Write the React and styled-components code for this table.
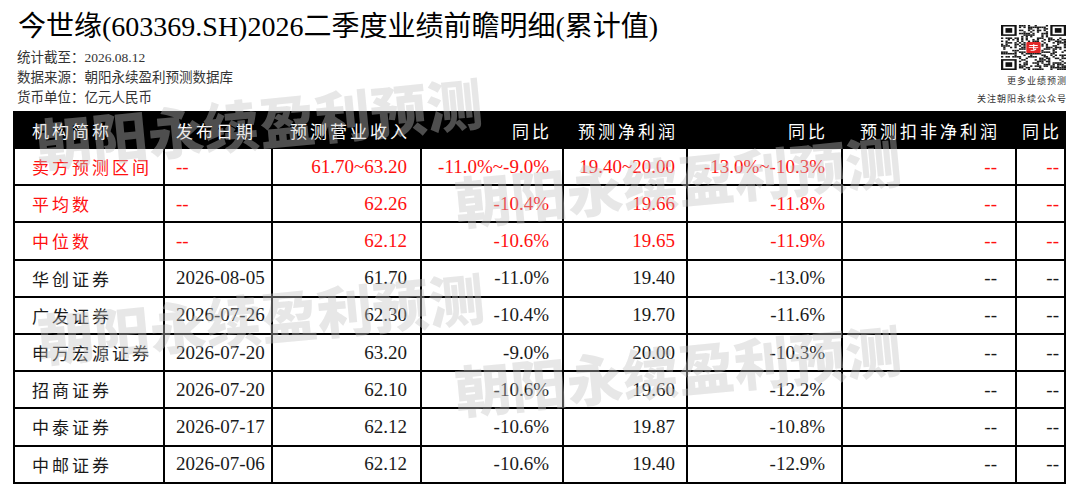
import React from 'react';
import styled, { createGlobalStyle } from 'styled-components';

const GlobalStyle = createGlobalStyle`
  html, body {
    margin: 0;
    padding: 0;
    background: #ffffff;
  }
  body {
    font-family: "Liberation Serif", "Noto Sans CJK SC", serif;
    color: #111111;
  }
`;

// column setup: track width (incl. right border), alignment, padding
const columns = [
  { w: 150, align: 'left', pl: 17 },
  { w: 108, align: 'left', pl: 11 },
  { w: 149, align: 'right', pr: 13 },
  { w: 142, align: 'right', pr: 13 },
  { w: 124, align: 'right', pr: 11 },
  { w: 155, align: 'right', pr: 16 },
  { w: 174, align: 'right', pr: 18 },
  { w: 49, align: 'right', pr: 5 },
];

const headers = ['机构简称', '发布日期', '预测营业收入', '同比', '预测净利润', '同比', '预测扣非净利润', '同比'];

const rows = [
  { red: true, cells: ['卖方预测区间', '--', '61.70~63.20', '-11.0%~-9.0%', '19.40~20.00', '-13.0%~-10.3%', '--', '--'] },
  { red: true, cells: ['平均数', '--', '62.26', '-10.4%', '19.66', '-11.8%', '--', '--'] },
  { red: true, cells: ['中位数', '--', '62.12', '-10.6%', '19.65', '-11.9%', '--', '--'] },
  { cells: ['华创证券', '2026-08-05', '61.70', '-11.0%', '19.40', '-13.0%', '--', '--'] },
  { cells: ['广发证券', '2026-07-26', '62.30', '-10.4%', '19.70', '-11.6%', '--', '--'] },
  { cells: ['申万宏源证券', '2026-07-20', '63.20', '-9.0%', '20.00', '-10.3%', '--', '--'] },
  { cells: ['招商证券', '2026-07-20', '62.10', '-10.6%', '19.60', '-12.2%', '--', '--'] },
  { cells: ['中泰证券', '2026-07-17', '62.12', '-10.6%', '19.87', '-10.8%', '--', '--'] },
  { cells: ['中邮证券', '2026-07-06', '62.12', '-10.6%', '19.40', '-12.9%', '--', '--'] },
];

const watermarks = [
  { x: 36, y: 115 },
  { x: 455, y: 173 },
  { x: 38, y: 310 },
  { x: 455, y: 362 },
];

const Page = styled.div`
  position: relative;
  width: 1080px;
  height: 499px;
  box-sizing: border-box;
  padding: 0 14px 0 13px;
  overflow: hidden;
`;

const TopBar = styled.div`
  display: flex;
  justify-content: space-between;
  height: 111px;
`;

const TitleBlock = styled.div`
  padding: 10px 0 0 4px;
`;

const Title = styled.h1`
  margin: 0 0 4px 1px;
  font-size: 28px;
  line-height: 34px;
  font-weight: 400;
  color: #000000;
  white-space: nowrap;
`;

const MetaLine = styled.div`
  font-size: 13.5px;
  line-height: 20px;
  color: #333333;
  white-space: nowrap;
`;

const QrBlock = styled.div`
  display: flex;
  flex-direction: column;
  align-items: flex-end;
  padding-top: 25px;
`;

const QrCode = styled.svg`
  display: block;
  width: 65px;
  height: 45px;
  margin-bottom: 2px;
`;

const QrCaption = styled.div`
  font-family: "Noto Sans CJK SC", sans-serif;
  font-size: 9px;
  line-height: 18px;
  letter-spacing: 1px;
  margin-right: -1px;
  color: #333333;
  white-space: nowrap;
`;

const Grid = styled.div`
  display: grid;
  grid-template-columns: ${columns.map((c) => `${c.w}px`).join(' ')};
  grid-template-rows: 38px;
  grid-auto-rows: 37.2px;
  width: fit-content;
  border-left: 2px solid #000000;
`;

const Cell = styled.div`
  box-sizing: border-box;
  display: flex;
  align-items: center;
  justify-content: ${(p) => (p.$align === 'right' ? 'flex-end' : 'flex-start')};
  padding: 0 ${(p) => p.$pr || 0}px 0 ${(p) => p.$pl || 0}px;
  border-right: 2px solid #000000;
  border-bottom: 2px solid #000000;
  background: #ffffff;
  color: ${(p) => (p.$red ? '#ff1010' : '#1a1a1a')};
  font-size: 19px;
  white-space: nowrap;
  overflow: hidden;
`;

const HeadCell = styled(Cell)`
  background: #000000;
  color: #ffffff;
  border-bottom: none;
`;

const Cjk = styled.span`
  font-family: "Noto Sans CJK SC", sans-serif;
  font-size: 17px;
  letter-spacing: 3px;
  margin-right: ${(p) => (p.$trim ? '-3px' : '0')};
`;

const Watermark = styled.div`
  position: absolute;
  left: ${(p) => p.$x}px;
  top: ${(p) => p.$y}px;
  font-family: "Noto Sans CJK SC", sans-serif;
  font-weight: 900;
  font-size: 56px;
  line-height: 56px;
  color: rgba(195, 195, 195, 0.4);
  transform: rotate(-5.5deg);
  transform-origin: 0 50%;
  pointer-events: none;
  white-space: nowrap;
`;

const QR_N = 29;

function buildQr() {
  let seed = 20260812;
  const rnd = () => {
    seed = (seed * 1103515245 + 12345) & 0x7fffffff;
    return seed / 0x7fffffff;
  };
  const cells = [];
  const inFinder = (x, y) =>
    (x < 8 && y < 8) || (x > QR_N - 9 && y < 8) || (x < 8 && y > QR_N - 9);
  const inLogo = (x, y) => x > 10 && x < 18 && y > 10 && y < 18;
  for (let y = 0; y < QR_N; y++) {
    for (let x = 0; x < QR_N; x++) {
      if (inFinder(x, y) || inLogo(x, y)) continue;
      if (rnd() > 0.5) cells.push([x, y]);
    }
  }
  return cells;
}

const qrCells = buildQr();

const Finder = ({ x, y }) => (
  <g>
    <rect x={x} y={y} width="7" height="7" fill="#111" />
    <rect x={x + 1} y={y + 1} width="5" height="5" fill="#fff" />
    <rect x={x + 2} y={y + 2} width="3" height="3" fill="#111" />
  </g>
);

const Qr = () => (
  <QrCode viewBox={`0 0 ${QR_N} ${QR_N}`} preserveAspectRatio="none">
    <rect width={QR_N} height={QR_N} fill="#fff" />
    {qrCells.map(([x, y]) => (
      <rect key={`${x}-${y}`} x={x} y={y} width="1" height="1" fill="#1a1a1a" />
    ))}
    <Finder x={0} y={0} />
    <Finder x={QR_N - 7} y={0} />
    <Finder x={0} y={QR_N - 7} />
    <rect x="11.3" y="11" width="6.4" height="7" rx="0.6" fill="#e32626" />
    <path d="M12.6 13.2h3.8M12.4 14.6h4.2M13.2 16.3c1.2 0.2 2.2-0.3 2.4-1.1M14.6 12.4v3.4" stroke="#fff" strokeWidth="0.55" fill="none" />
  </QrCode>
);

const App = () => (
  <>
    <GlobalStyle />
    <Page>
      <TopBar>
        <TitleBlock>
          <Title>今世缘(603369.SH)2026二季度业绩前瞻明细(累计值)</Title>
          <MetaLine>统计截至：2026.08.12</MetaLine>
          <MetaLine>数据来源：朝阳永续盈利预测数据库</MetaLine>
          <MetaLine>货币单位：亿元人民币</MetaLine>
        </TitleBlock>
        <QrBlock>
          <Qr />
          <QrCaption>更多业绩预测</QrCaption>
          <QrCaption>关注朝阳永续公众号</QrCaption>
        </QrBlock>
      </TopBar>

      <Grid>
        {headers.map((h, i) => (
          <HeadCell key={`h${i}`} $align={columns[i].align} $pl={columns[i].pl} $pr={columns[i].pr}>
            <Cjk $trim={columns[i].align === 'right'}>{h}</Cjk>
          </HeadCell>
        ))}
        {rows.map((row, r) =>
          row.cells.map((value, i) => (
            <Cell
              key={`${r}-${i}`}
              $align={columns[i].align}
              $pl={columns[i].pl}
              $pr={columns[i].pr}
              $red={row.red}
            >
              {i === 0 ? <Cjk>{value}</Cjk> : value}
            </Cell>
          ))
        )}
      </Grid>

      {watermarks.map((w, i) => (
        <Watermark key={i} $x={w.x} $y={w.y}>
          朝阳永续盈利预测
        </Watermark>
      ))}
    </Page>
  </>
);

export default App;
